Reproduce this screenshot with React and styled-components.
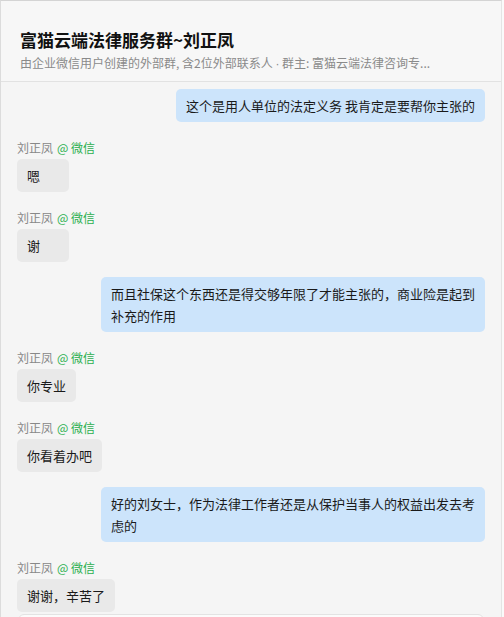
import React from "react";
import styled, { createGlobalStyle } from "styled-components";

const Global = createGlobalStyle`
  html, body { margin: 0; padding: 0; background: #fafafa; }
  body { font-family: "Noto Sans CJK SC", "Noto Sans", sans-serif; }
  * { box-sizing: border-box; }
`;

const Frame = styled.div`
  width: 502px;
  height: 617px;
  overflow: hidden;
  background: #f5f5f5;
  border-top: 1px solid #d4d4d4;
  border-left: 1px solid #dcdcdc;
  border-right: 1px solid #e4e4e4;
  display: flex;
  flex-direction: column;
`;

const Header = styled.header`
  background: #f7f7f7;
  border-bottom: 1px solid #e2e2e2;
  padding: 27px 20px 9px 19px;
`;

const Title = styled.h1`
  margin: 0;
  font-size: 17px;
  line-height: 24px;
  font-weight: 700;
  color: #111;
`;

const Subtitle = styled.div`
  margin-top: 2px;
  height: 18px;
  font-size: 12px;
  line-height: 18px;
  color: #8a8a8a;
  white-space: nowrap;
  overflow: hidden;
`;

const Dot = styled.span`
  font-family: "Liberation Sans", sans-serif;
  line-height: 1;
`;

const Messages = styled.div`
  flex: 1;
  padding: 7px 16px 0 16px;
  display: flex;
  flex-direction: column;
  gap: 15px;
`;

const Row = styled.div`
  display: flex;
  flex-direction: column;
  align-items: ${(p) => (p.$mine ? "flex-end" : "flex-start")};
`;

const Sender = styled.div`
  margin: 2px 0 2px;
  font-size: 12px;
  line-height: 18px;
  color: #888;
  display: flex;
  gap: 4px;
`;

const Source = styled.span`
  color: #2bb04f;
`;

const Bubble = styled.div`
  max-width: 384px;
  min-width: 52px;
  padding: 6px 10px 5px;
  font-size: 13px;
  line-height: 22px;
  color: #1a1a1a;
  border-radius: 5px;
  background: ${(p) => (p.$mine ? "#cce4fb" : "#e9e9e9")};
  word-break: break-all;
`;

const NextCard = styled.div`
  margin-top: -13px;
  margin-left: 1px;
  margin-right: 1px;
  height: 30px;
  background: #fbfbfb;
  border: 1px solid #e3e3e3;
  border-radius: 6px;
`;

const messages = [
  { mine: true, text: "这个是用人单位的法定义务 我肯定是要帮你主张的" },
  { mine: false, text: "嗯" },
  { mine: false, text: "谢" },
  { mine: true, text: "而且社保这个东西还是得交够年限了才能主张的，商业险是起到补充的作用" },
  { mine: false, text: "你专业" },
  { mine: false, text: "你看着办吧" },
  { mine: true, text: "好的刘女士，作为法律工作者还是从保护当事人的权益出发去考虑的" },
  { mine: false, text: "谢谢，辛苦了" },
];

export default function App() {
  return (
    <>
      <Global />
      <Frame>
        <Header>
          <Title>富猫云端法律服务群~刘正凤</Title>
          <Subtitle>
            由企业微信用户创建的外部群, 含2位外部联系人 <Dot>·</Dot> 群主: 富猫云端法律咨询专...
          </Subtitle>
        </Header>
        <Messages>
          {messages.map((m, i) => (
            <Row key={i} $mine={m.mine}>
              {!m.mine && (
                <Sender>
                  <span>刘正凤</span>
                  <Source>@ 微信</Source>
                </Sender>
              )}
              <Bubble $mine={m.mine}>{m.text}</Bubble>
            </Row>
          ))}
          <NextCard />
        </Messages>
      </Frame>
    </>
  );
}
